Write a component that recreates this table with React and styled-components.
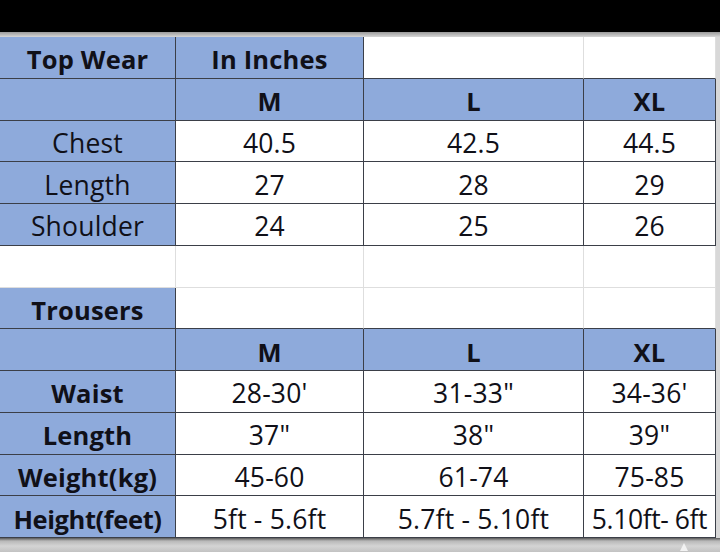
import React from "react";
import styled, { createGlobalStyle } from "styled-components";

const Global = createGlobalStyle`
  html, body { margin: 0; padding: 0; background: #c9c9c9; }
  body { width: 720px; height: 552px; overflow: hidden; }
`;

const Page = styled.div`
  width: 720px;
  height: 552px;
  display: flex;
  flex-direction: column;
  background: #c6c6c6;
  font-family: "Open Sans", "Noto Sans", sans-serif;
  overflow: hidden;
`;

const TopBar = styled.div`
  height: 32px;
  background: #000;
  flex: none;
`;

const Rule = styled.div`
  height: 5px;
  background: linear-gradient(#9a9a9a, #d6d6d6);
  flex: none;
`;

const SheetRow = styled.div`
  display: flex;
  flex: none;
  background: #d8d8d8;
`;

const Grid = styled.div`
  display: grid;
  grid-template-columns: 176px 188px 220px 132px;
  grid-template-rows: repeat(12, 41.75px);
  background: #fff;
`;

const Cell = styled.div`
  display: flex;
  align-items: center;
  justify-content: center;
  box-sizing: border-box;
  padding-top: 4px;
  font-size: ${(p) => (p.$bold ? "25.5px" : "26.5px")};
  font-weight: ${(p) => (p.$bold ? 700 : 400)};
  color: #101018;
  white-space: nowrap;
  letter-spacing: ${(p) => (p.$tight ? "-0.4px" : "0.2px")};
  background: ${(p) => (p.$blue ? "#8eaadb" : "#ffffff")};
  border-right: ${(p) => (p.$dark ? "1.5px solid #3b3f48" : "1px solid #dedede")};
  border-bottom: ${(p) => (p.$dark || p.$darkBottom ? "1.5px solid #3b3f48" : "1px solid #dedede")};
`;

const Shadow = styled.div`
  flex: 1;
  background: linear-gradient(#5a5a5a 0px, #b8b8b8 3px, #d4d4d4 8px, #c2c2c2 14px);
  position: relative;
`;

const Marker = styled.div`
  position: absolute;
  left: 680px;
  top: 5px;
  width: 0;
  height: 0;
  border-left: 4px solid transparent;
  border-right: 4px solid transparent;
  border-bottom: 8px solid #f2f2f2;
`;

const rows = [
  [
    { t: "Top Wear", bold: 1, blue: 1, dark: 1 },
    { t: "In Inches", bold: 1, blue: 1, dark: 1 },
    { t: "", darkBottom: 1 },
    { t: "", darkBottom: 1 },
  ],
  [
    { t: "", blue: 1, dark: 1 },
    { t: "M", bold: 1, blue: 1, dark: 1 },
    { t: "L", bold: 1, blue: 1, dark: 1 },
    { t: "XL", bold: 1, blue: 1, dark: 1 },
  ],
  [
    { t: "Chest", blue: 1, dark: 1 },
    { t: "40.5", dark: 1 },
    { t: "42.5", dark: 1 },
    { t: "44.5", dark: 1 },
  ],
  [
    { t: "Length", blue: 1, dark: 1 },
    { t: "27", dark: 1 },
    { t: "28", dark: 1 },
    { t: "29", dark: 1 },
  ],
  [
    { t: "Shoulder", blue: 1, dark: 1 },
    { t: "24", dark: 1 },
    { t: "25", dark: 1 },
    { t: "26", dark: 1 },
  ],
  [{ t: "" }, { t: "" }, { t: "" }, { t: "" }],
  [
    { t: "Trousers", bold: 1, blue: 1, dark: 1 },
    { t: "", darkBottom: 1 },
    { t: "", darkBottom: 1 },
    { t: "", darkBottom: 1 },
  ],
  [
    { t: "", blue: 1, dark: 1 },
    { t: "M", bold: 1, blue: 1, dark: 1 },
    { t: "L", bold: 1, blue: 1, dark: 1 },
    { t: "XL", bold: 1, blue: 1, dark: 1 },
  ],
  [
    { t: "Waist", bold: 1, blue: 1, dark: 1 },
    { t: "28-30'", dark: 1 },
    { t: "31-33\"", dark: 1 },
    { t: "34-36'", dark: 1 },
  ],
  [
    { t: "Length", bold: 1, blue: 1, dark: 1 },
    { t: "37\"", dark: 1 },
    { t: "38\"", dark: 1 },
    { t: "39\"", dark: 1 },
  ],
  [
    { t: "Weight(kg)", bold: 1, blue: 1, dark: 1 },
    { t: "45-60", dark: 1 },
    { t: "61-74", dark: 1 },
    { t: "75-85", dark: 1 },
  ],
  [
    { t: "Height(feet)", bold: 1, blue: 1, dark: 1, tight: 1 },
    { t: "5ft - 5.6ft", dark: 1 },
    { t: "5.7ft - 5.10ft", dark: 1 },
    { t: "5.10ft- 6ft", dark: 1, tight: 1 },
  ],
];

export default function App() {
  return (
    <Page>
      <Global />
      <TopBar />
      <Rule />
      <SheetRow>
        <Grid>
          {rows.flatMap((r, i) =>
            r.map((c, j) => (
              <Cell
                key={`${i}-${j}`}
                $bold={c.bold}
                $blue={c.blue}
                $dark={c.dark}
                $darkBottom={c.darkBottom}
                $tight={c.tight}
              >
                {c.t}
              </Cell>
            ))
          )}
        </Grid>
      </SheetRow>
      <Shadow>
        <Marker />
      </Shadow>
    </Page>
  );
}
